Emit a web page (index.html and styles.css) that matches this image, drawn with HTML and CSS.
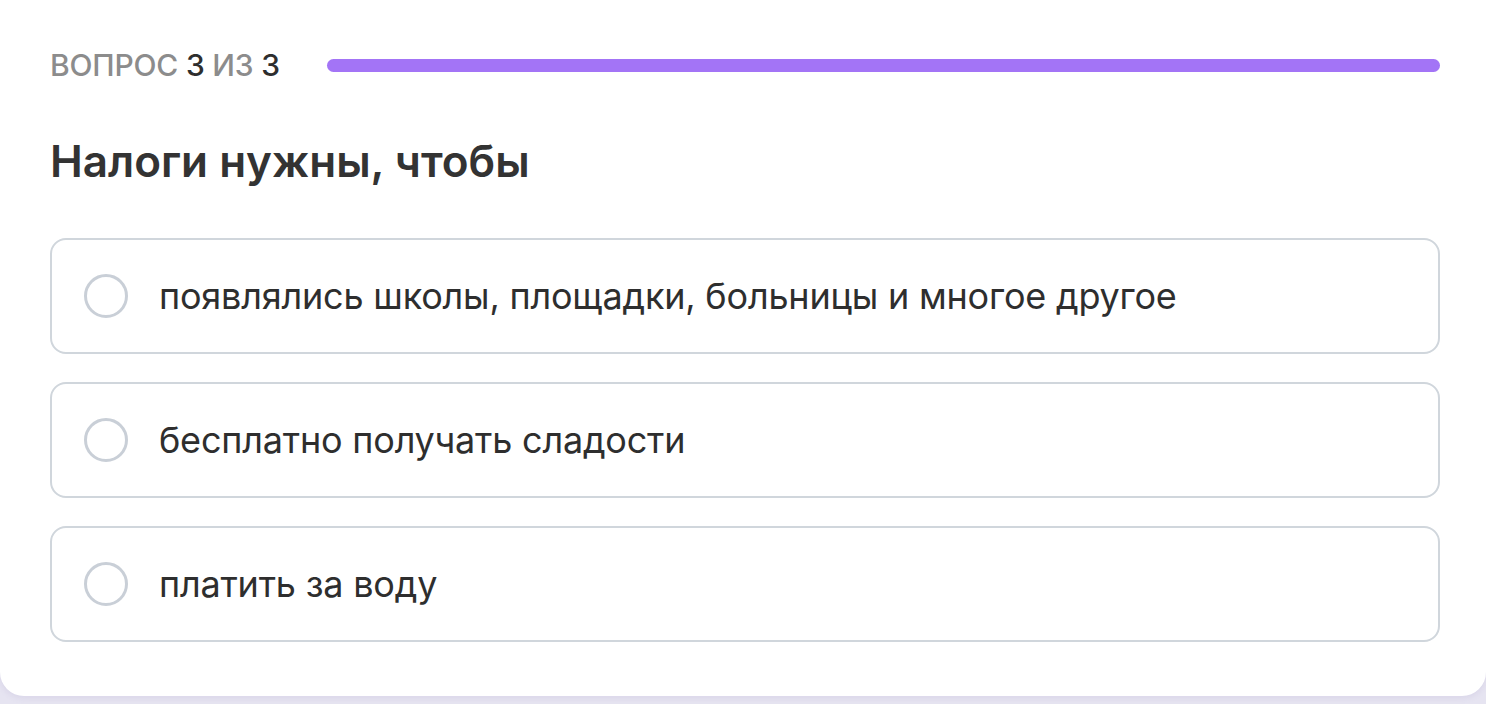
FILE: index.html
```html
<!DOCTYPE html>
<html lang="ru">
<head>
    <meta charset="UTF-8">
    <meta name="viewport" content="width=device-width, initial-scale=1.0">
    <title>Вопрос 3 из 3</title>
    <link rel="stylesheet" href="styles.css">
</head>
<body>
    <div class="card">
        <div class="quiz-head">
            <div class="counter">ВОПРОС <b>3</b> ИЗ <b>3</b></div>
            <div class="progress"><div class="progress-fill" style="width: 100%"></div></div>
        </div>
        <h1 class="question">Налоги нужны, чтобы</h1>
        <div class="answers">
            <label class="answer"><span class="radio"></span>появлялись школы, площадки, больницы и многое другое</label>
            <label class="answer"><span class="radio"></span>бесплатно получать сладости</label>
            <label class="answer"><span class="radio"></span>платить за воду</label>
        </div>
    </div>
</body>
</html>
```

FILE: styles.css
```css
html, body {
    margin: 0;
    padding: 0;
    font-family: Inter, "Noto Sans", sans-serif;
}
body {
    background: #e6e4f1;
    height: 704px;
    overflow: hidden;
}
.card {
    background: #fff;
    border-radius: 0 0 24px 24px;
    box-sizing: border-box;
    height: 696px;
    padding: 50px 46px 0 50px;
    box-shadow: 0 2px 6px rgba(120, 110, 170, 0.12);
}
.quiz-head {
    display: flex;
    align-items: center;
    gap: 47px;
    height: 30px;
}
.counter {
    font-size: 30px;
    font-weight: 500;
    color: #8c8c8c;
    letter-spacing: -0.2px;
    white-space: nowrap;
}
.counter b {
    font-weight: 500;
    color: #2e2e2e;
}
.progress {
    flex: 1;
    height: 13px;
    border-radius: 7px;
    background: #ece6fb;
}
.progress-fill {
    height: 100%;
    border-radius: 7px;
    background: #a374f6;
}
.question {
    margin: 55px 0 0;
    font-size: 44px;
    font-weight: 600;
    color: #333;
    line-height: 52px;
}
.answers {
    margin-top: 51px;
    display: flex;
    flex-direction: column;
    gap: 28px;
}
.answer {
    display: flex;
    align-items: center;
    height: 116px;
    box-sizing: border-box;
    border: 2px solid #d0d6dc;
    border-radius: 16px;
    padding-left: 32px;
    font-size: 36px;
    color: #2e2e2e;
    letter-spacing: -0.2px;
    cursor: pointer;
}
.radio {
    width: 38px;
    height: 38px;
    border: 3px solid #c9cfd7;
    border-radius: 50%;
    margin-right: 31px;
    flex-shrink: 0;
}
```
